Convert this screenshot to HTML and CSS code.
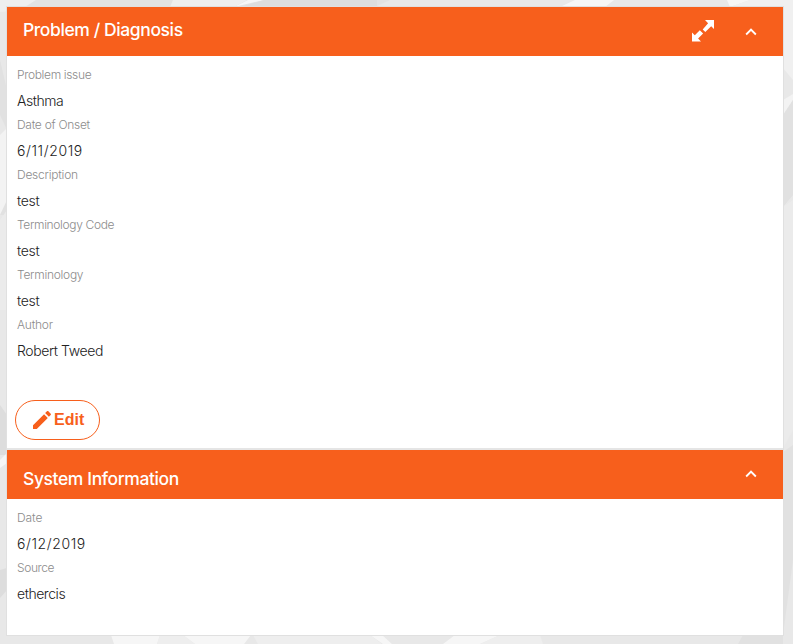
FILE: index.html
```
<!DOCTYPE html>
<html lang="en">
<head>
<meta charset="utf-8">
<title>Problem / Diagnosis</title>
<link rel="stylesheet" href="styles.css">
</head>
<body>
<svg class="backdrop" viewBox="0 0 793 644" aria-hidden="true">
  <path fill="#e2e2e2" d="M36 0H390L375 7H0V6z"/>
  <path fill="#eee" d="M0 0H36L20 10L0 12zM173 0H247L234 7H170z"/>
  <path fill="#f6f6f6" d="M234 7L264 0H248zM560 7L575 0H614L605 7zM727 0H750L730 7z"/>
  <path fill="#ddd" d="M264 0H377V7H240z"/>
  <path fill="#f0f0f0" d="M750 0H793V80L783 68V7H730z"/>
  <path fill="#f3f3f3" d="M783 100L793 94V100L783 115zM0 135L7 128V203L0 215z"/>
  <path fill="#e1e1e1" d="M783 115L793 100V195L783 207zM0 60L7 90V130L0 115zM0 215L7 200V215H0z"/>
  <path fill="#ebebeb" d="M783 207L793 200V430L783 448zM0 220L7 210V310H0z"/>
  <path fill="#ddd" d="M0 405L7 415V455H0zM0 570L7 568V590L0 598z"/>
  <path fill="#f6f6f6" d="M0 460L7 453V463L0 468z"/>
  <path fill="#e1e1e1" d="M783 452L793 445V560L783 635V644H738L743 635H783z"/>
  <path fill="#f6f6f6" d="M111 635H160L157 644H114zM183 635H251L244 644H195zM370 635H382L392 644H383zM455 635H500L480 644H443z"/>
  <path fill="#eee" d="M160 635H183L195 644H157zM253 635H370L382 644H258zM500 635H540L543 644H480z"/>
</svg>
<main class="card">
  <section class="panel panel-main">
    <header class="bar">
      <h1 class="title t-problem">Problem / Diagnosis</h1>
      <svg class="expand" viewBox="0 0 22 22"><path d="M13 0h9v9l-2.800-2.800-5.900 5.900-2.600-2.600 5.400-6.300zM0 21.500v-9l2.800 2.800 5-5 3.300 3.300-5 5L9 21.500z"/></svg>
      <svg class="chevron" viewBox="0 0 24 24"><path d="M12 8l-6 6 1.410 1.410L12 10.830l4.590 4.580L18 14z"/></svg>
    </header>
    <dl class="fields">
      <dt class="w-issue">Problem issue</dt><dd class="w-asthma">Asthma</dd>
      <dt class="w-onset">Date of Onset</dt><dd class="w-date">6/11/2019</dd>
      <dt class="w-desc">Description</dt><dd class="w-test">test</dd>
      <dt class="w-code">Terminology Code</dt><dd class="w-test">test</dd>
      <dt class="w-term">Terminology</dt><dd class="w-test">test</dd>
      <dt class="w-author">Author</dt><dd class="w-robert">Robert Tweed</dd>
    </dl>
    <button class="edit" type="button">
      <svg class="pencil" viewBox="0 0 24 24"><path d="M3 17.250V21h3.750L17.810 9.940l-3.750-3.750L3 17.250zM20.710 7.040c.39-.39.39-1.020 0-1.410l-2.340-2.340c-.39-.39-1.020-.39-1.410 0l-1.830 1.830 3.750 3.750 1.830-1.830z"/></svg>
      <span>Edit</span>
    </button>
  </section>
  <section class="panel panel-system">
    <header class="bar bar-system">
      <h2 class="title t-system">System Information</h2>
      <svg class="chevron" viewBox="0 0 24 24"><path d="M12 8l-6 6 1.410 1.410L12 10.830l4.590 4.580L18 14z"/></svg>
    </header>
    <dl class="fields">
      <dt class="w-d">Date</dt><dd class="w-date">6/12/2019</dd>
      <dt class="w-source">Source</dt><dd class="w-ether">ethercis</dd>
    </dl>
  </section>
</main>
</body>
</html>
```
FILE: styles.css
```
* { box-sizing: border-box; }
body {
  margin: 0;
  height: 644px;
  padding: 7px 10px 9px 7px;
  overflow: hidden;
  background: #e8e8e8;
  font-family: Inter, "Liberation Sans", sans-serif;
}
.backdrop { position: absolute; left: 0; top: 0; width: 793px; height: 644px; z-index: -1; }
.card {
  height: 628px;
  background: #fff;
  box-shadow: 0 0 0 1px #e0e0e0;
}
.panel-main { height: 443px; border-bottom: 2px solid #e5e5e5; }
.bar {
  display: flex;
  align-items: center;
  height: 49px;
  padding: 0 20px 0 16px;
  background: #f75f1c;
}
.title {
  flex: 1;
  margin: 0 0 3px;
  color: #fff;
  font-size: 17.5px;
  line-height: 24px;
  font-weight: 500;
  letter-spacing: -0.4px;
  white-space: nowrap;
}
.t-system { margin: 9px 0 0; }
.expand { width: 22px; height: 22px; fill: #fff; margin: 0 25px 2px 0; }
.chevron { width: 24px; height: 24px; padding: 1px; fill: #fff; }
.bar svg { flex: none; }
.bar-system .chevron { margin-bottom: 1px; }
.fields { margin: 0; padding: 7px 10px 0; }
.fields dt {
  height: 24px;
  line-height: 24px;
  font-size: 12px;
  font-weight: 300;
  color: #8c8c8c;
  white-space: nowrap;
}
.fields dd {
  height: 26px;
  margin: 0;
  line-height: 28px;
  font-size: 14px;
  font-weight: 300;
  color: #222;
  white-space: nowrap;
}
.w-issue, .w-code { letter-spacing: -0.35px; }
.w-onset, .w-term { letter-spacing: -0.28px; }
.w-desc, .w-author { letter-spacing: -0.24px; }
.w-d { letter-spacing: -0.1px; }
.w-source { letter-spacing: -0.4px; }
.w-asthma { letter-spacing: -0.45px; }
.w-date { letter-spacing: 0.6px; }
.w-test { letter-spacing: -0.3px; }
.w-robert { letter-spacing: -0.4px; }
.w-ether { letter-spacing: -0.45px; }
.edit {
  display: flex;
  align-items: center;
  width: 85px;
  height: 40px;
  margin: 37px 0 0 8px;
  padding: 0 0 0 15px;
  border: 1px solid #f75f1c;
  border-radius: 20px;
  background: #fff;
  color: #f75f1c;
  font: bold 16px "Liberation Sans", sans-serif;
}
.pencil { width: 24px; height: 24px; margin-left: -1px; fill: #f75f1c; }
```
